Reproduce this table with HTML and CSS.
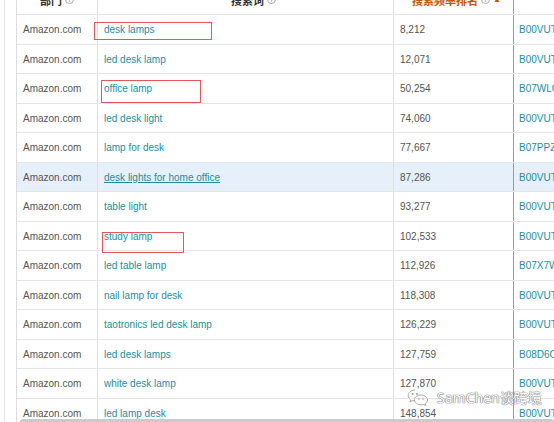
FILE: index.html
```html
<!DOCTYPE html>
<html lang="zh">
<head>
<meta charset="utf-8">
<link rel="stylesheet" href="styles.css">
</head>
<body>
<div class="page">
  <div class="grid">
    <div class="row head">
      <div class="cell c1">部门 <span class="info">i</span></div>
      <div class="cell c2">搜索词 <span class="info">i</span></div>
      <div class="cell c3 sorted">搜索频率排名 <span class="info">i</span> <span class="arrow">▲</span></div>
      <div class="cell c4"></div>
    </div>
    <div class="row"><div class="cell c1">Amazon.com</div><div class="cell c2"><a class="term">desk lamps</a><span class="mark m1"></span></div><div class="cell c3">8,212</div><div class="cell c4 asin">B00VUT3O</div></div>
    <div class="row"><div class="cell c1">Amazon.com</div><div class="cell c2"><a class="term">led desk lamp</a></div><div class="cell c3">12,071</div><div class="cell c4 asin">B00VUT3O</div></div>
    <div class="row"><div class="cell c1">Amazon.com</div><div class="cell c2"><a class="term">office lamp</a><span class="mark m2"></span></div><div class="cell c3">50,254</div><div class="cell c4 asin">B07WLC8L</div></div>
    <div class="row"><div class="cell c1">Amazon.com</div><div class="cell c2"><a class="term">led desk light</a></div><div class="cell c3">74,060</div><div class="cell c4 asin">B00VUT3O</div></div>
    <div class="row"><div class="cell c1">Amazon.com</div><div class="cell c2"><a class="term">lamp for desk</a></div><div class="cell c3">77,667</div><div class="cell c4 asin">B07PPZ1L</div></div>
    <div class="row active"><div class="cell c1">Amazon.com</div><div class="cell c2"><a class="term hover">desk lights for home office</a></div><div class="cell c3">87,286</div><div class="cell c4 asin">B00VUT3O</div></div>
    <div class="row"><div class="cell c1">Amazon.com</div><div class="cell c2"><a class="term">table light</a></div><div class="cell c3">93,277</div><div class="cell c4 asin">B00VUT3O</div></div>
    <div class="row"><div class="cell c1">Amazon.com</div><div class="cell c2"><a class="term">study lamp</a><span class="mark m3"></span></div><div class="cell c3">102,533</div><div class="cell c4 asin">B00VUT3O</div></div>
    <div class="row"><div class="cell c1">Amazon.com</div><div class="cell c2"><a class="term">led table lamp</a></div><div class="cell c3">112,926</div><div class="cell c4 asin">B07X7WQ2</div></div>
    <div class="row"><div class="cell c1">Amazon.com</div><div class="cell c2"><a class="term">nail lamp for desk</a></div><div class="cell c3">118,308</div><div class="cell c4 asin">B00VUT3O</div></div>
    <div class="row"><div class="cell c1">Amazon.com</div><div class="cell c2"><a class="term">taotronics led desk lamp</a></div><div class="cell c3">126,229</div><div class="cell c4 asin">B00VUT3O</div></div>
    <div class="row"><div class="cell c1">Amazon.com</div><div class="cell c2"><a class="term">led desk lamps</a></div><div class="cell c3">127,759</div><div class="cell c4 asin">B08D6C4K</div></div>
    <div class="row"><div class="cell c1">Amazon.com</div><div class="cell c2"><a class="term">white desk lamp</a></div><div class="cell c3">127,870</div><div class="cell c4 asin">B00VUT3O</div></div>
    <div class="row"><div class="cell c1">Amazon.com</div><div class="cell c2"><a class="term">led lamp desk</a></div><div class="cell c3">148,854</div><div class="cell c4 asin">B00VUT3O</div></div>
  </div>
  <div class="scrollbar"></div>
  <div class="watermark">
    <svg class="wechat" width="22" height="18" viewBox="0 0 22 18">
      <g fill="none" stroke="#ffffff" stroke-width="2.4">
        <path d="M8 2C4.1 2 1.2 4.6 1.2 7.6c0 1.7 0.9 3.2 2.4 4.2l-0.6 2.1 2.5-1.3c0.8 0.2 1.6 0.3 2.5 0.3"/>
        <path d="M14 7c3.6 0 6.5 2.3 6.5 5.1 0 1.5-0.8 2.8-2.1 3.7l0.5 1.7-2.1-1.1c-0.9 0.3-1.8 0.4-2.8 0.4-3.6 0-6.5-2.3-6.5-5.1S10.4 7 14 7z"/>
      </g>
      <g fill="none" stroke="#9a9a9a" stroke-width="0.9">
        <path d="M8 2C4.1 2 1.2 4.6 1.2 7.6c0 1.7 0.9 3.2 2.4 4.2l-0.6 2.1 2.5-1.3c0.8 0.2 1.6 0.3 2.5 0.3"/>
        <path d="M14 7c3.6 0 6.5 2.3 6.5 5.1 0 1.5-0.8 2.8-2.1 3.7l0.5 1.7-2.1-1.1c-0.9 0.3-1.8 0.4-2.8 0.4-3.6 0-6.5-2.3-6.5-5.1S10.4 7 14 7z"/>
      </g>
      <g fill="#9a9a9a">
        <circle cx="5.5" cy="6" r="0.9"/><circle cx="10" cy="6" r="0.9"/>
        <circle cx="12" cy="11" r="0.8"/><circle cx="16" cy="11" r="0.8"/>
      </g>
    </svg>
    <span class="wm-text">SamChen谈跨境</span>
  </div>
</div>
</body>
</html>
```

FILE: styles.css
```css
html, body {
  margin: 0;
  padding: 0;
  width: 554px;
  height: 422px;
  overflow: hidden;
  background: #ffffff;
}

.page {
  position: relative;
  display: flow-root;
  height: 422px;
  margin-left: 4px;
  padding-left: 11px;
  border-left: 1px solid #e3e3e3;
  font-family: "Liberation Sans", Arial, "Noto Sans CJK SC", sans-serif;
  font-size: 10px;
  color: #555555;
}

.grid {
  margin-top: -15px;
  width: 620px;
  border-left: 1px solid #dcdcdc;
}

.row {
  display: grid;
  grid-template-columns: 81px 296px 120px 120px;
  height: 29.5px;
  box-sizing: border-box;
  border-bottom: 1px solid #e6e6e6;
}

.row.head {
  height: 30px;
}

.row.active {
  background: #e6f0fa;
}

.cell {
  position: relative;
  display: flex;
  align-items: center;
  padding-left: 6px;
  padding-top: 1px;
  border-right: 1px solid #dedede;
  white-space: nowrap;
  overflow: visible;
}

.cell.c3 {
  border-right: 1px solid #9c9c9c;
}

.head .cell {
  justify-content: center;
  padding-left: 0;
  padding-top: 0;
  font-size: 11px;
  font-weight: bold;
  color: #333333;
  font-family: "Liberation Sans", "Noto Sans CJK SC", sans-serif;
}

.head .cell.c2 {
  padding-left: 16px;
}

.head .cell.c3 {
  padding-left: 6px;
}

.head .sorted {
  color: #c45500;
}

.info {
  display: inline-flex;
  align-items: center;
  justify-content: center;
  width: 9px;
  height: 9px;
  margin-left: 3px;
  border: 1px solid #aaaaaa;
  border-radius: 50%;
  font-size: 7px;
  font-weight: normal;
  color: #999999;
  box-sizing: border-box;
}

.arrow {
  font-size: 8px;
  margin-left: 3px;
  color: #c45500;
}

.term {
  color: #1d8ea0;
  text-decoration: none;
}

.term.hover {
  text-decoration: underline;
}

.asin {
  color: #1d8ea0;
  padding-left: 5px;
}

.mark {
  position: absolute;
  border: 1px solid #e4585c;
  box-sizing: border-box;
}

.mark.m1 {
  left: -4px;
  top: 7px;
  width: 118px;
  height: 18px;
}

.mark.m2 {
  left: 3px;
  top: 6px;
  width: 100px;
  height: 23px;
}

.mark.m3 {
  left: 4px;
  top: 10px;
  width: 82px;
  height: 21px;
}

.scrollbar {
  position: absolute;
  left: 15px;
  right: 0;
  top: 419px;
  height: 6px;
  background: #cbcbcb;
  border-radius: 3px;
}

.watermark {
  position: absolute;
  left: 402px;
  top: 387px;
  display: flex;
  align-items: center;
  gap: 8px;
}

.wm-text {
  font-family: "Noto Sans", "Noto Sans CJK SC", sans-serif;
  font-size: 14px;
  color: #ffffff;
  text-shadow: 0 0 1px #777777, 0 0 1px #777777, 0 0 1px #777777;
}
```
